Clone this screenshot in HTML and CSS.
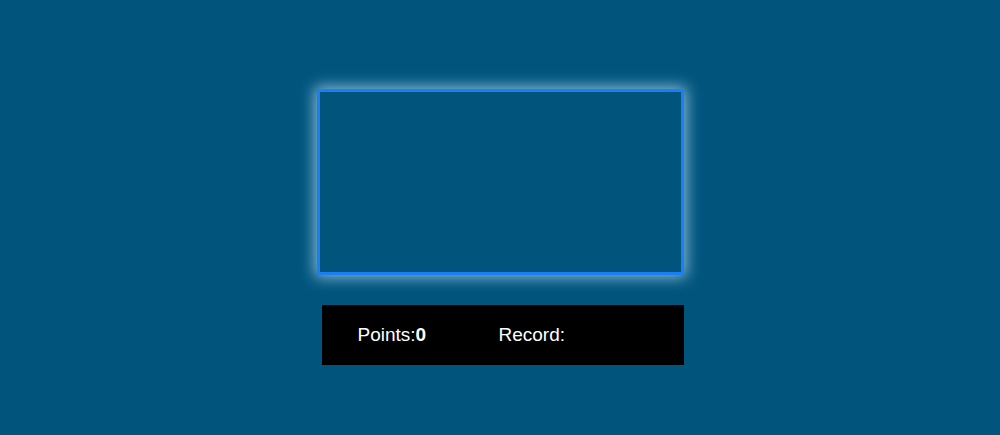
FILE: index.html
```html
<!DOCTYPE html>
<html>
<head>
<meta charset="utf-8">
<link rel="stylesheet" href="styles.css">
</head>
<body>
<div class="page">
  <div class="game">
    <div class="board"></div>
    <div class="scorebar">
      <div class="score">Points:<b>0</b></div>
      <div class="record">Record:</div>
    </div>
  </div>
</div>
</body>
</html>
```
FILE: styles.css
```css
html, body {
  margin: 0;
  padding: 0;
  background: #01557d;
  height: 100%;
  font-family: "Liberation Sans", Arial, sans-serif;
}
.page {
  display: flex;
  justify-content: center;
  padding-top: 89px;
}
.game {
  width: 367px;
  display: flex;
  flex-direction: column;
}
.board {
  box-sizing: border-box;
  width: 367px;
  height: 186px;
  border: 3px solid #1a7ff3;
  box-shadow: 0 0 14px 2px rgba(190, 225, 255, 0.75);
}
.scorebar {
  margin-top: 30px;
  margin-left: 5px;
  width: 362px;
  height: 60px;
  background: #000;
  color: #fff;
  display: flex;
  align-items: center;
  font-size: 19px;
  box-sizing: border-box;
  padding-left: 36px;
}
.score {
  width: 141px;
}
```
